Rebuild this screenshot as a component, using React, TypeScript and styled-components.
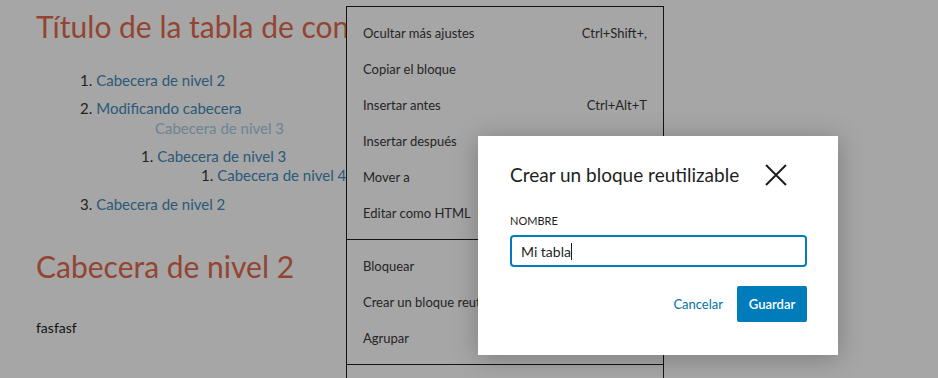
import React from "react";
import styled, { createGlobalStyle } from "styled-components";

const Global = createGlobalStyle`
  html, body { margin: 0; padding: 0; background: #fff; }
  body { font-family: Lato, "Noto Sans", sans-serif; overflow: hidden; }
  * { box-sizing: border-box; }
`;

const Page = styled.div`
  position: relative;
  width: 938px;
  height: 378px;
  overflow: hidden;
  background: #fff;
`;

const Content = styled.main`
  padding: 6px 0 0 36px;
  display: flex;
  flex-direction: column;
`;

const Title = styled.h1`
  margin: 0;
  font-size: 30px;
  line-height: 40px;
  font-weight: 400;
  color: #e26a4d;
  white-space: nowrap;
`;

const TocList = styled.ol<{ $indent: number; $top?: number }>`
  margin: ${(p) => p.$top ?? 0}px 0 0 0;
  padding: 0 0 0 ${(p) => p.$indent}px;
  list-style: none;
  display: flex;
  flex-direction: column;
`;

const TocItem = styled.li<{ $h: number; $top?: number }>`
  margin-top: ${(p) => p.$top ?? 0}px;
  font-size: 15px;
  line-height: ${(p) => p.$h}px;
  color: #363636;
  white-space: nowrap;
`;

const Num = styled.span`
  margin-right: 4px;
`;

const TocLink = styled.a`
  color: #438abb;
  text-decoration: none;
`;

const Ghost = styled.div`
  font-size: 15px;
  line-height: 12px;
  color: #a8cde2;
  padding-left: 75px;
  white-space: nowrap;
`;

const H2 = styled.h2`
  margin: 0;
  font-size: 30px;
  line-height: 40px;
  font-weight: 400;
  color: #e26a4d;
`;

const Para = styled.p`
  margin: 0;
  font-size: 14px;
  line-height: 20px;
  color: #1e1e1e;
`;

const Menu = styled.div`
  position: absolute;
  left: 346px;
  top: 6px;
  width: 318px;
  height: 400px;
  background: #fff;
  border: 1px solid #1e1e1e;
  display: flex;
  flex-direction: column;
`;

const MenuGroup = styled.div`
  padding: 8px 0;
  border-bottom: 1px solid #1e1e1e;
  display: flex;
  flex-direction: column;
`;

const MenuItem = styled.div`
  height: 36px;
  padding: 0 16px;
  display: flex;
  align-items: center;
  justify-content: space-between;
  font-size: 13px;
  color: #3a3a3a;
  white-space: nowrap;
`;

const Shortcut = styled.span`
  color: #3a3a3a;
`;

const Backdrop = styled.div`
  position: absolute;
  inset: 0;
  background: rgba(0, 0, 0, 0.35);
`;

const Modal = styled.div`
  position: absolute;
  left: 478px;
  top: 136px;
  width: 360px;
  height: 219px;
  background: #fff;
  box-shadow: 0 3px 24px rgba(0, 0, 0, 0.25);
  padding: 26px 31px 0 32px;
  display: flex;
  flex-direction: column;
`;

const ModalHeader = styled.div`
  display: flex;
  align-items: center;
  height: 26px;
  gap: 19px;
`;

const ModalTitle = styled.h1`
  margin: 0;
  font-size: 19px;
  line-height: 26px;
  font-weight: 400;
  color: #1e1e1e;
  white-space: nowrap;
`;

const CloseButton = styled.button`
  width: 36px;
  height: 36px;
  padding: 0;
  border: 0;
  background: transparent;
  display: flex;
  align-items: center;
  justify-content: center;
  color: #1e1e1e;
`;

const Label = styled.label`
  margin-top: 25px;
  font-size: 11px;
  line-height: 16px;
  text-transform: uppercase;
  color: #1e1e1e;
`;

const Input = styled.div`
  margin-top: 6px;
  height: 32px;
  border: 2px solid #007cba;
  border-radius: 4px;
  padding: 0 9px;
  display: flex;
  align-items: center;
  font-size: 14px;
  color: #1e1e1e;
`;

const Caret = styled.span`
  display: inline-block;
  width: 1px;
  height: 17px;
  background: #1e1e1e;
`;

const Actions = styled.div`
  margin-top: 19px;
  display: flex;
  justify-content: flex-end;
  align-items: center;
  gap: 14px;
`;

const LinkButton = styled.button`
  border: 0;
  background: transparent;
  padding: 0;
  font-family: inherit;
  font-size: 13px;
  color: #0073aa;
`;

const PrimaryButton = styled.button`
  height: 36px;
  width: 70px;
  border: 0;
  border-radius: 2px;
  background: #007cba;
  color: #fff;
  font-family: inherit;
  font-size: 13px;
  font-weight: 600;
`;

export default function App() {
  return (
    <>
      <Global />
      <Page>
        <Content>
          <Title>Título de la tabla de contenidos</Title>
          <TocList $indent={44} $top={20}>
            <TocItem $h={28}>
              <Num>1.</Num>
              <TocLink>Cabecera de nivel 2</TocLink>
            </TocItem>
            <TocItem $h={28}>
              <Num>2.</Num>
              <TocLink>Modificando cabecera</TocLink>
              <Ghost>Cabecera de nivel 3</Ghost>
              <TocList $indent={61} $top={8}>
                <TocItem $h={28}>
                  <Num>1.</Num>
                  <TocLink>Cabecera de nivel 3</TocLink>
                  <TocList $indent={60}>
                    <TocItem $h={10}>
                      <Num>1.</Num>
                      <TocLink>Cabecera de nivel 4</TocLink>
                    </TocItem>
                  </TocList>
                </TocItem>
              </TocList>
            </TocItem>
            <TocItem $h={38} $top={5}>
              <Num>3.</Num>
              <TocLink>Cabecera de nivel 2</TocLink>
            </TocItem>
          </TocList>
          <H2 style={{ marginTop: 23 }}>Cabecera de nivel 2</H2>
          <Para style={{ marginTop: 32 }}>fasfasf</Para>
        </Content>

        <Menu>
          <MenuGroup>
            <MenuItem>
              <span>Ocultar más ajustes</span>
              <Shortcut>Ctrl+Shift+,</Shortcut>
            </MenuItem>
            <MenuItem>
              <span>Copiar el bloque</span>
            </MenuItem>
            <MenuItem>
              <span>Insertar antes</span>
              <Shortcut>Ctrl+Alt+T</Shortcut>
            </MenuItem>
            <MenuItem>
              <span>Insertar después</span>
              <Shortcut>Ctrl+Alt+Y</Shortcut>
            </MenuItem>
            <MenuItem>
              <span>Mover a</span>
            </MenuItem>
            <MenuItem>
              <span>Editar como HTML</span>
            </MenuItem>
          </MenuGroup>
          <MenuGroup>
            <MenuItem>
              <span>Bloquear</span>
            </MenuItem>
            <MenuItem>
              <span>Crear un bloque reutilizable</span>
            </MenuItem>
            <MenuItem>
              <span>Agrupar</span>
            </MenuItem>
          </MenuGroup>
        </Menu>

        <Backdrop />

        <Modal role="dialog">
          <ModalHeader>
            <ModalTitle>Crear un bloque reutilizable</ModalTitle>
            <CloseButton aria-label="Cerrar">
              <svg width="24" height="24" viewBox="0 0 24 24">
                <path d="M2 2 L22 22 M22 2 L2 22" stroke="#1e1e1e" strokeWidth="2" fill="none" />
              </svg>
            </CloseButton>
          </ModalHeader>
          <Label>Nombre</Label>
          <Input>
            Mi tabla<Caret />
          </Input>
          <Actions>
            <LinkButton>Cancelar</LinkButton>
            <PrimaryButton>Guardar</PrimaryButton>
          </Actions>
        </Modal>
      </Page>
    </>
  );
}
